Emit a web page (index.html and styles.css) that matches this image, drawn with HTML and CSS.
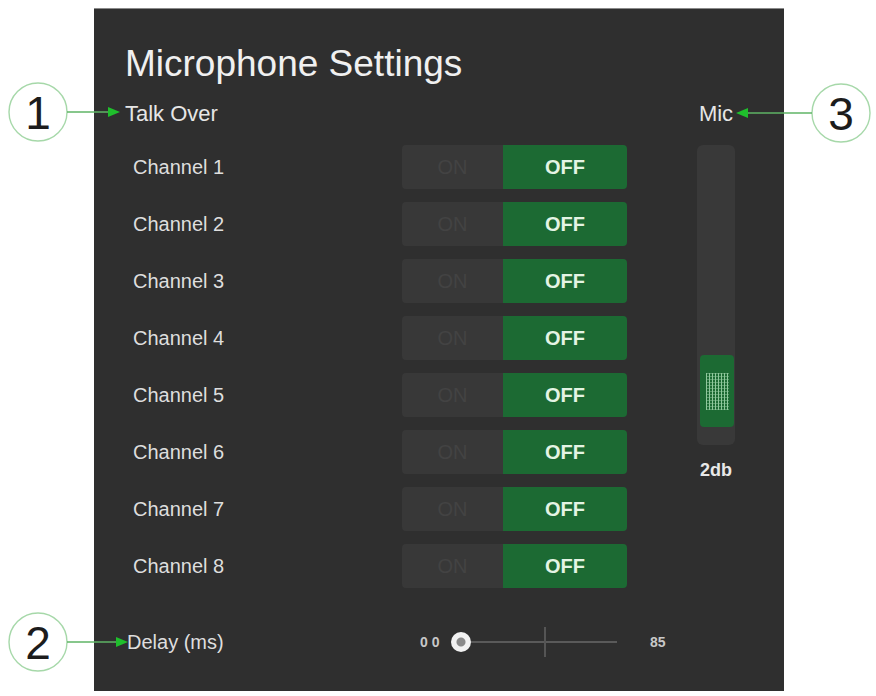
FILE: index.html
```html
<!DOCTYPE html>
<html>
<head>
    <title>Microphone Settings</title>
    <link rel="stylesheet" href="styles.css">
</head>
<body>
    <div class="stage">
        <div class="panel">
            <h1 class="title">Microphone Settings</h1>
            <div class="main">
                <div class="talk">
                    <div class="head">Talk Over</div>
                    <div class="channels">
                        <div class="row"><span class="label">Channel 1</span><div class="toggle"><span class="on">ON</span><span class="off">OFF</span></div></div>
                        <div class="row"><span class="label">Channel 2</span><div class="toggle"><span class="on">ON</span><span class="off">OFF</span></div></div>
                        <div class="row"><span class="label">Channel 3</span><div class="toggle"><span class="on">ON</span><span class="off">OFF</span></div></div>
                        <div class="row"><span class="label">Channel 4</span><div class="toggle"><span class="on">ON</span><span class="off">OFF</span></div></div>
                        <div class="row"><span class="label">Channel 5</span><div class="toggle"><span class="on">ON</span><span class="off">OFF</span></div></div>
                        <div class="row"><span class="label">Channel 6</span><div class="toggle"><span class="on">ON</span><span class="off">OFF</span></div></div>
                        <div class="row"><span class="label">Channel 7</span><div class="toggle"><span class="on">ON</span><span class="off">OFF</span></div></div>
                        <div class="row"><span class="label">Channel 8</span><div class="toggle"><span class="on">ON</span><span class="off">OFF</span></div></div>
                    </div>
                </div>
                <div class="mic">
                    <div class="head">Mic</div>
                    <div class="mic-track">
                        <div class="mic-thumb"><div class="grip"></div></div>
                    </div>
                    <div class="mic-value">2db</div>
                </div>
            </div>
            <div class="delay">
                <span class="delay-label">Delay (ms)</span>
                <span class="range-min">0 0</span>
                <div class="range">
                    <span class="range-thumb"></span>
                    <span class="range-line"></span>
                    <span class="range-tick"></span>
                </div>
                <span class="range-max">85</span>
            </div>
        </div>

        <!-- numbered callouts -->
        <svg class="callouts" width="876" height="696" viewBox="0 0 876 696">
            <g class="ring">
                <circle cx="38" cy="112" r="29"/>
                <circle cx="841" cy="113" r="29"/>
                <circle cx="38" cy="642" r="29"/>
            </g>
            <g class="lead">
                <line x1="67" y1="112" x2="110" y2="112"/>
                <line x1="812" y1="113" x2="746" y2="113"/>
                <line x1="67" y1="642" x2="118" y2="642"/>
            </g>
            <g class="tip">
                <polygon points="120,112 108,107 108,117"/>
                <polygon points="736,113 748,108 748,118"/>
                <polygon points="128,642 116,637 116,647"/>
            </g>
            <g class="num">
                <text x="38" y="129">1</text>
                <text x="841" y="130">3</text>
                <text x="38" y="659">2</text>
            </g>
        </svg>
    </div>
</body>
</html>
```

FILE: styles.css
```css
body {
    margin: 0;
    background: #fff;
    font-family: "Liberation Sans", Arial, sans-serif;
}
.stage {
    position: relative;
    width: 876px;
    height: 696px;
    overflow: hidden;
}
.panel {
    width: 690px;
    height: 683px;
    margin: 8px 0 0 94px;
    padding: 35px 0 0 31px;
    box-sizing: border-box;
    border-top: 1px solid #8a8a8a;
    background: #2f2f2f;
    color: #dedede;
}
.title {
    margin: 0;
    font-size: 37px;
    line-height: 40px;
    font-weight: normal;
    color: #f0f0f0;
}
.main {
    display: flex;
    gap: 70px;
    margin-top: 18px;
}
.head {
    height: 24px;
    font-size: 22px;
    line-height: 24px;
    color: #e6e6e6;
}
.channels {
    display: flex;
    flex-direction: column;
    gap: 13px;
    margin-top: 19px;
}
.row {
    display: flex;
    align-items: center;
    height: 44px;
}
.label {
    width: 277px;
    padding-left: 8px;
    box-sizing: border-box;
    font-size: 20px;
}
.toggle {
    display: flex;
    width: 225px;
    height: 44px;
    border-radius: 4px;
    overflow: hidden;
    font-size: 20px;
    font-weight: bold;
    line-height: 44px;
    text-align: center;
}
.on {
    width: 101px;
    background: #383838;
    color: #434343;
    font-weight: normal;
}
.off {
    flex: 1;
    background: #1c6a33;
    color: #e4f4e4;
}
.mic {
    width: 38px;
    display: flex;
    flex-direction: column;
    align-items: center;
}
.mic-track {
    display: flex;
    flex-direction: column;
    justify-content: flex-end;
    width: 38px;
    height: 300px;
    margin-top: 19px;
    padding: 0 1px 18px 3px;
    box-sizing: border-box;
    border-radius: 6px;
    background: #393939;
}
.mic-thumb {
    display: flex;
    align-items: center;
    justify-content: center;
    height: 72px;
    border-radius: 4px;
    background: #1c6a33;
}
.grip {
    width: 23px;
    height: 37px;
    background:
        repeating-linear-gradient(90deg, #8fc89c 0 1px, transparent 1px 3px),
        repeating-linear-gradient(0deg, rgba(143, 200, 156, 0.5) 0 1px, transparent 1px 3px);
}
.mic-value {
    margin-top: 15px;
    font-size: 18px;
    font-weight: bold;
    color: #e8e8e8;
}
.delay {
    display: flex;
    align-items: center;
    height: 30px;
    margin-top: 39px;
}
.delay-label {
    width: 295px;
    padding-left: 2px;
    box-sizing: border-box;
    font-size: 20px;
}
.range-min,
.range-max {
    font-size: 14px;
    font-weight: bold;
    color: #c8c8c8;
}
.range-min {
    width: 31px;
}
.range {
    position: relative;
    width: 166px;
    height: 30px;
}
.range-line {
    position: absolute;
    left: 10px;
    right: 0;
    top: 14px;
    height: 2px;
    background: #5a5a5a;
}
.range-tick {
    position: absolute;
    left: 93px;
    top: 0;
    width: 2px;
    height: 30px;
    background: #555;
}
.range-thumb {
    position: absolute;
    left: 0;
    top: 5px;
    width: 20px;
    height: 20px;
    border-radius: 50%;
    background: radial-gradient(circle, #8a8a8a 0 4px, #f2f2f2 5px);
    z-index: 1;
}
.range-max {
    margin-left: 33px;
}
.callouts {
    position: absolute;
    left: 0;
    top: 0;
    pointer-events: none;
}
.ring circle {
    fill: none;
    stroke: #a6d8a9;
    stroke-width: 1.4;
}
.lead line {
    stroke: #5fb566;
    stroke-width: 1.5;
}
.tip polygon {
    fill: #1fbf2c;
}
.num text {
    font-family: "Liberation Sans", Arial, sans-serif;
    font-size: 46px;
    text-anchor: middle;
    fill: #1c1c1c;
}
```
